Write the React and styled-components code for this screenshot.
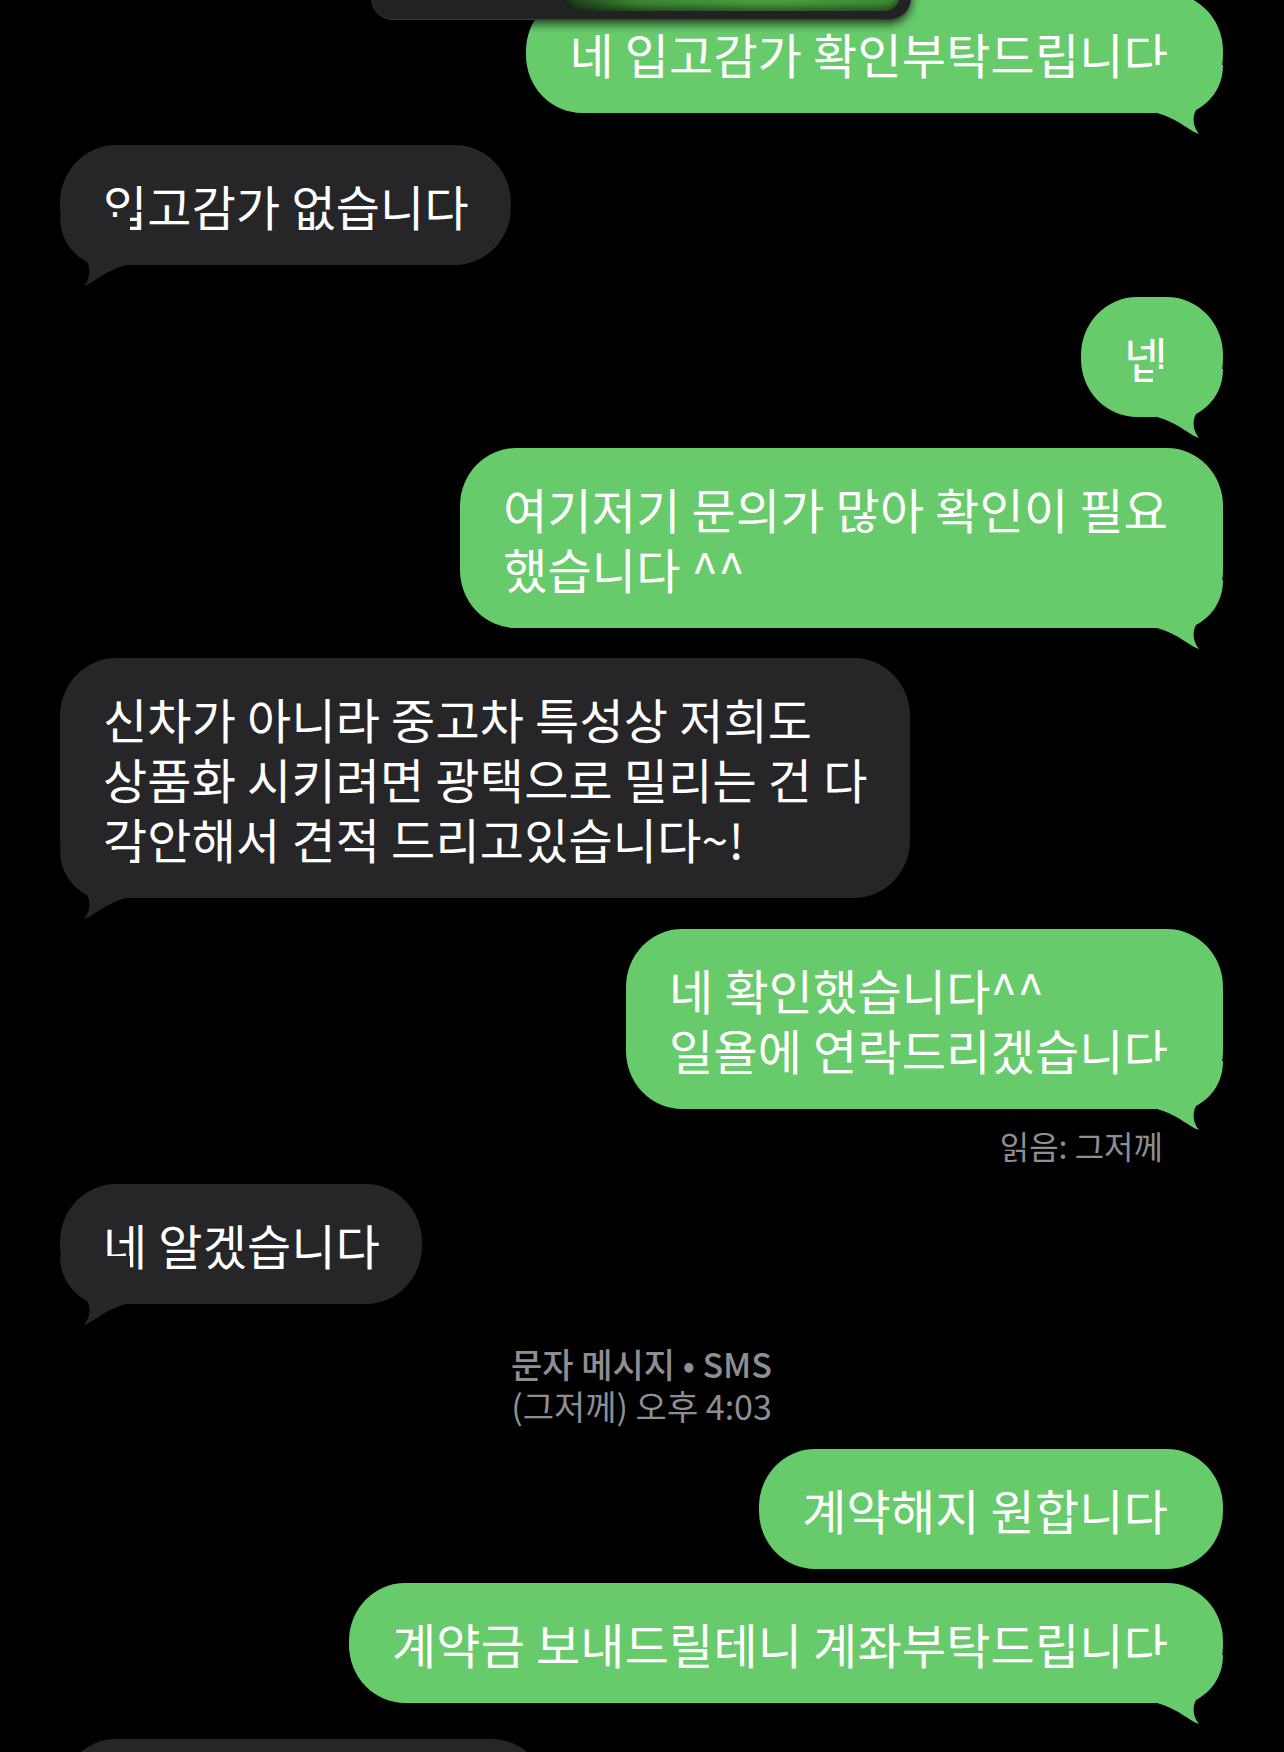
import React from 'react';
import styled, { createGlobalStyle } from 'styled-components';

const GREEN = '#68cb6b';
const GRAY = '#262628';

const GlobalStyle = createGlobalStyle`
  html, body {
    margin: 0;
    padding: 0;
    background: #000;
    overflow: hidden;
  }
  body {
    font-family: "Noto Sans CJK KR", "Noto Sans", sans-serif;
    -webkit-font-smoothing: antialiased;
  }
`;

const Screen = styled.div`
  position: relative;
  width: 1284px;
  height: 1752px;
  overflow: hidden;
  background: #000;
`;

const Thread = styled.div`
  display: flex;
  flex-direction: column;
  padding: 0 61px 0 60px;
`;

const Row = styled.div`
  display: flex;
  justify-content: ${p => (p.$me ? 'flex-end' : 'flex-start')};
  margin-top: ${p => p.$mt}px;
`;

const Bubble = styled.div`
  position: relative;
  box-sizing: border-box;
  min-height: 120px;
  width: ${p => (p.$w ? `${p.$w}px` : 'auto')};
  padding: 30px ${p => (p.$me ? 55 : 42)}px 30px 43px;
  border-radius: 56px / 58px;
  background: ${p => (p.$me ? GREEN : GRAY)};
  color: #fff;
  font-size: 48px;
  line-height: 60px;
  letter-spacing: 0.2px;
  white-space: nowrap;
`;

const TailSvg = styled.svg`
  position: absolute;
  bottom: -22px;
  width: 70px;
  height: 70px;
  ${p => (p.$me ? 'right: 0;' : 'left: 0; transform: scaleX(-1);')}
`;

const Tail = ({ me }) => (
  <TailSvg $me={me} viewBox="0 0 70 70">
    <path
      d="M70 0 C70 22 58 37 43 45 C39 52 40 62 46 69 C36 66 26 54 4 48 L0 48 L0 0 Z"
      fill={me ? GREEN : GRAY}
    />
  </TailSvg>
);

const Receipt = styled.div`
  align-self: flex-end;
  margin: 16px 60px 0 0;
  color: #8e8e93;
  font-size: 32px;
  line-height: 40px;
`;

const Stamp = styled.div`
  margin-top: 39px;
  text-align: center;
  color: #8e8e93;
  font-size: 34px;
  line-height: 42px;
`;

const StampHead = styled.div`
  font-weight: 500;
`;

const TopCard = styled.div`
  position: absolute;
  top: -30px;
  left: 371px;
  width: 540px;
  height: 49px;
  border-radius: 22px;
  background: #222224;
  border-bottom: 1px solid #3a3a3c;
  box-shadow: 0 4px 10px rgba(0, 0, 0, 0.7);
`;

const TopCardGlow = styled.div`
  position: absolute;
  top: 0;
  left: 192px;
  right: 11px;
  bottom: 8px;
  border-radius: 0 0 16px 16px;
  background: linear-gradient(90deg, #1f3a1a 0%, #3b8532 22%, #4c9f40 60%, #3f8a35 100%);
  box-shadow: inset 0 -4px 6px rgba(0, 0, 0, 0.45);
`;

const Msg = ({ me, tail, mt, w, children }) => (
  <Row $me={me} $mt={mt}>
    <Bubble $me={me} $w={w}>
      {tail && <Tail me={me} />}
      {children}
    </Bubble>
  </Row>
);

export default function App() {
  return (
    <Screen>
      <GlobalStyle />
      <Thread>
        <Msg me tail mt={-7}>네 입고감가 확인부탁드립니다</Msg>
        <Msg tail mt={32}>입고감가 없습니다</Msg>
        <Msg me tail mt={32}>넵</Msg>
        <Msg me tail mt={31}>
          여기저기 문의가 많아 확인이 필요
          <br />
          했습니다 ^^
        </Msg>
        <Msg tail mt={30}>
          신차가 아니라 중고차 특성상 저희도
          <br />
          상품화 시키려면 광택으로 밀리는 건 다
          <br />
          감안해서 견적 드리고있습니다~!
        </Msg>
        <Msg me tail mt={31}>
          네 확인했습니다^^
          <br />
          일욜에 연락드리겠습니다
        </Msg>
        <Receipt>읽음: 그저께</Receipt>
        <Msg tail mt={19}>네 알겠습니다</Msg>
        <Stamp>
          <StampHead>문자 메시지 • SMS</StampHead>
          <div>(그저께) 오후 4:03</div>
        </Stamp>
        <Msg me mt={22}>계약해지 원합니다</Msg>
        <Msg me tail mt={14}>계약금 보내드릴테니 계좌부탁드립니다</Msg>
        <Msg mt={36} w={488}>&nbsp;</Msg>
      </Thread>
      <TopCard>
        <TopCardGlow />
      </TopCard>
    </Screen>
  );
}
